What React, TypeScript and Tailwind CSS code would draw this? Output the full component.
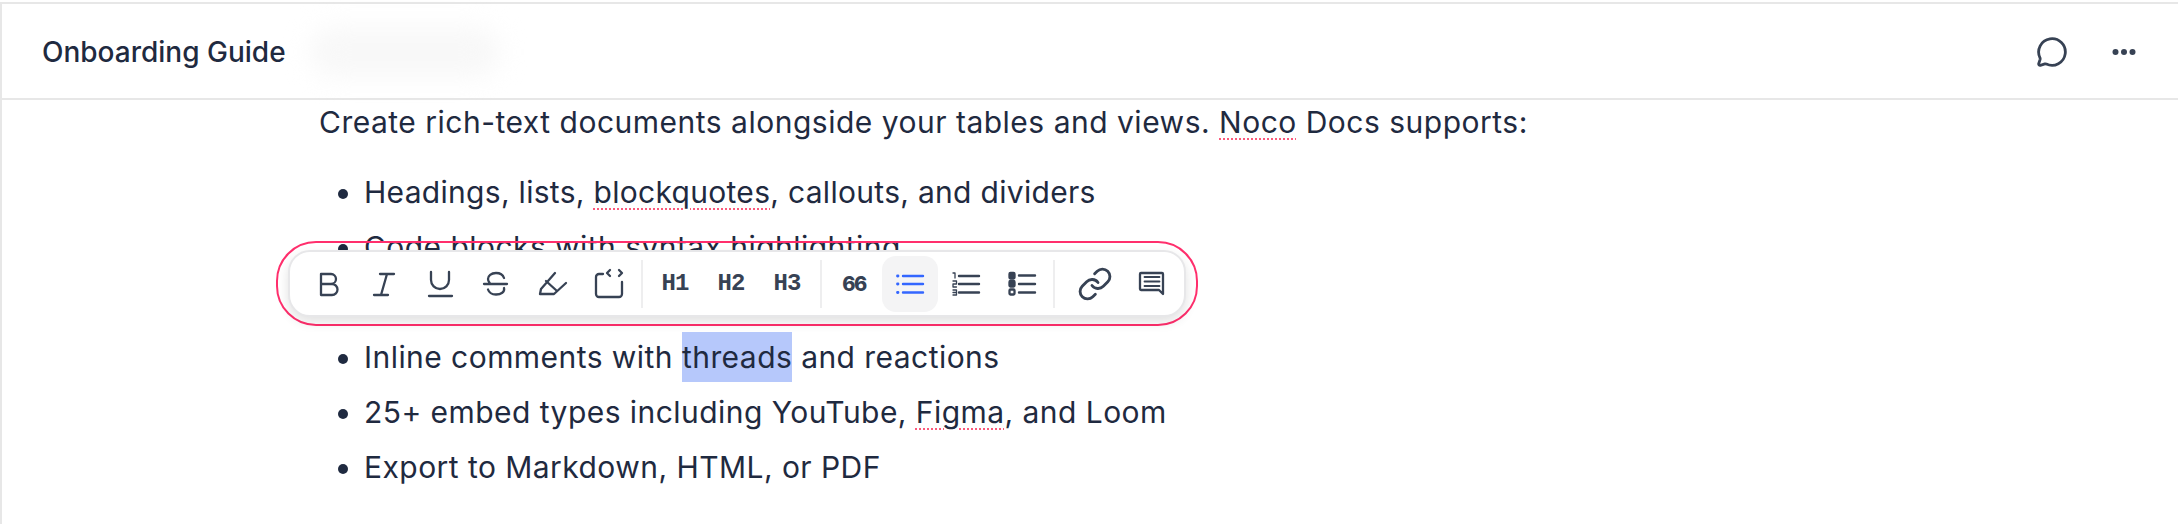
import type { ReactNode } from "react";
import { Link, MessageCircle } from "lucide-react";

const font = { fontFamily: "Inter, 'Noto Sans', sans-serif" };

function Glyph({ children, className = "" }: { children: ReactNode; className?: string }) {
  return (
    <svg
      viewBox="0 0 32 32"
      fill="none"
      stroke="currentColor"
      strokeWidth={2.3}
      strokeLinecap="round"
      strokeLinejoin="round"
      className={`h-8 w-8 ${className}`}
    >
      {children}
    </svg>
  );
}

function ToolButton({ children, active }: { children: ReactNode; active?: boolean }) {
  return (
    <button
      className={`flex h-14 w-14 shrink-0 items-center justify-center rounded-[14px] ${
        active ? "bg-[#f4f4f5] text-[#3366ff]" : "text-[#374254]"
      }`}
    >
      {children}
    </button>
  );
}

function Divider() {
  return <div className="ml-[5px] mr-[4px] h-12 w-[2px] shrink-0 bg-[#eeeeef]" />;
}

function Misspelled({ children }: { children: ReactNode }) {
  return <span className="underline decoration-[#fb5a7c] decoration-dotted decoration-2 underline-offset-[5px]">{children}</span>;
}

function HeadingLabel({ children }: { children: ReactNode }) {
  return <span className="font-['Liberation_Mono'] text-[24px] font-bold leading-none tracking-[-1px] text-[#374254]">{children}</span>;
}

function Toolbar() {
  return (
    <div className="absolute left-[276px] top-[241px] rounded-[40px] border-2 border-[#ff2e6c] px-[10px] py-[7px]">
      <div className="flex h-[67px] w-[898px] items-center rounded-[22px] border-2 border-[#e7e7e9] bg-white pl-[10px] shadow-[0_5px_12px_rgba(0,0,0,0.12)]">
        <ToolButton>
          <Glyph>
            <path d="M9 6h10a5 5 0 0 1 0 10H9zM9 16h11a5.5 5.5 0 0 1 0 11H9z" />
          </Glyph>
        </ToolButton>
        <ToolButton>
          <Glyph>
            <path d="M12 6h14M6 27h14M19 6l-6 21" />
          </Glyph>
        </ToolButton>
        <ToolButton>
          <Glyph>
            <path d="M7 4v8a9 9 0 0 0 18 0V4M5 28h23" />
          </Glyph>
        </ToolButton>
        <ToolButton>
          <Glyph>
            <path d="M24 10c-1-3-4-5-8-5-5 0-8 3-8 6 0 2 1 3 2 4.5M4 16h23M24 20c1 4-3 6.5-8 6.5-4 0-7-2-8-5" />
          </Glyph>
        </ToolButton>
        <ToolButton>
          <Glyph>
            <path d="M19 5L5 21l-1 5h14l12-11M10 13l11 10" />
          </Glyph>
        </ToolButton>
        <ToolButton>
          <Glyph>
            <path d="M11 6H7a3 3 0 0 0-3 3v17a3 3 0 0 0 3 3h20a3 3 0 0 0 3-3V14M18 2l-3 3 3 3M27 2l3 3-3 3" />
          </Glyph>
        </ToolButton>
        <Divider />
        <ToolButton>
          <HeadingLabel>H1</HeadingLabel>
        </ToolButton>
        <ToolButton>
          <HeadingLabel>H2</HeadingLabel>
        </ToolButton>
        <ToolButton>
          <HeadingLabel>H3</HeadingLabel>
        </ToolButton>
        <Divider />
        <ToolButton>
          <span className="text-[20px] font-extrabold leading-none tracking-[-1.5px] text-[#374254]" style={font}>
            66
          </span>
        </ToolButton>
        <ToolButton active>
          <Glyph>
            <path d="M9 8h20M9 16h20M9 24.5h20" strokeWidth={2.4} />
            <path d="M3.5 8h.5M3.5 16h.5M3.5 24.5h.5" strokeWidth={2.8} />
          </Glyph>
        </ToolButton>
        <ToolButton>
          <Glyph>
            <path d="M9 8h20M9 16h20M9 24.5h20" strokeWidth={2.4} />
            <path d="M3 5h2v5M3 13h3.5v3H3v3h3.5M3 22h3.5v5H3M3 24.5h3" strokeWidth={1.3} />
          </Glyph>
        </ToolButton>
        <ToolButton>
          <Glyph>
            <path d="M13 7.5h16M13 16h16M13 24.5h16" strokeWidth={2.4} />
            <rect x="3.5" y="5" width="5" height="5.5" rx="1" fill="currentColor" />
            <rect x="3.5" y="13" width="5" height="5.5" rx="1" fill="currentColor" />
            <rect x="3.5" y="21.5" width="5" height="5" rx="1" />
          </Glyph>
        </ToolButton>
        <div className="ml-[3px] mr-[12px] h-12 w-[2px] shrink-0 bg-[#eeeeef]" />
        <ToolButton>
          <Link className="h-9 w-9" strokeWidth={1.9} />
        </ToolButton>
        <ToolButton>
          <Glyph>
            <path d="M6 5h21a1 1 0 0 1 1 1v20l-4-4H6a1 1 0 0 1-1-1V6a1 1 0 0 1 1-1z" />
            <path d="M9.5 9h15M9.5 13.5h15M9.5 18h15" strokeWidth={1.8} />
          </Glyph>
        </ToolButton>
      </div>
    </div>
  );
}

export default function App() {
  return (
    <div className="relative h-[524px] w-full overflow-hidden bg-white pt-[2px] text-[#1f2a40]" style={font}>
      <div className="h-full border-t-2 border-l-2 border-[#e7e7e7]">
        <header className="flex h-[96px] items-center justify-between border-b-2 border-[#e7e7e7] pl-10 pr-[38px] pt-[2px]">
          <div className="flex items-center">
            <h1 className="text-[28px] font-[450]">Onboarding Guide</h1>
            <div className="ml-[24px] h-[50px] w-[190px] rounded-full bg-[#f8f8f8] blur-md" />
          </div>
          <div className="flex items-center gap-10 text-[#374254]">
            <MessageCircle className="h-8 w-8" strokeWidth={2.1} />
            <svg viewBox="0 0 32 32" fill="currentColor" className="h-8 w-8">
              <circle cx="7.5" cy="16" r="3" />
              <circle cx="16" cy="16" r="3" />
              <circle cx="24.5" cy="16" r="3" />
            </svg>
          </div>
        </header>
        <main className="pl-[317px] text-[30px] leading-[55px] tracking-[0.45px]">
          <p className="mt-[-5px] tracking-[0.5px]">
            Create rich-text documents alongside your tables and views. <Misspelled>Noco</Misspelled> Docs supports:
          </p>
          <ul className="mt-[15px] list-disc pl-[45px]">
            <li className="tracking-[0.3px]">
              Headings, lists, <Misspelled>blockquotes</Misspelled>, callouts, and dividers
            </li>
            <li>Code blocks with syntax highlighting</li>
            <li>Interactive tables and charts</li>
            <li>
              Inline comments with <span className="bg-[#b6c8fb] py-[7px]">threads</span> and reactions
            </li>
            <li>
              25+ embed types including YouTube, <Misspelled>Figma</Misspelled>, and Loom
            </li>
            <li>Export to Markdown, HTML, or PDF</li>
          </ul>
        </main>
      </div>
      <Toolbar />
    </div>
  );
}
